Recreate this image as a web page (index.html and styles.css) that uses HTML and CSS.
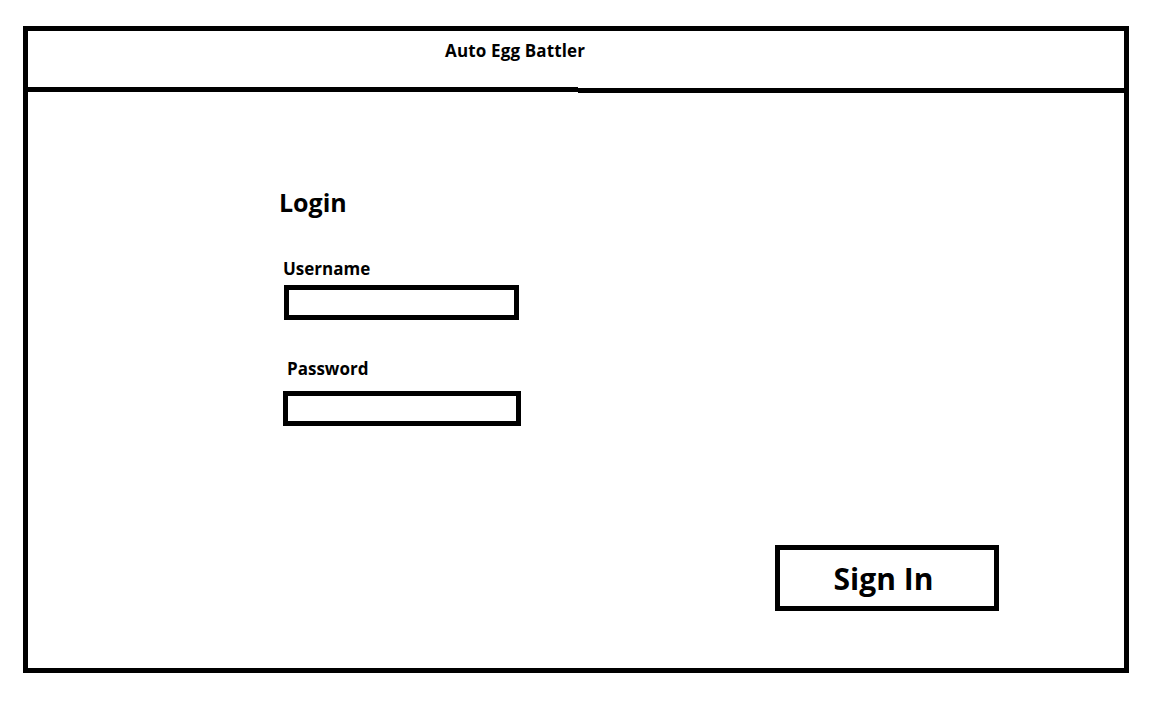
FILE: index.html
```html
<!DOCTYPE html>
<html lang="en">
<head>
<meta charset="utf-8">
<title>Auto Egg Battler</title>
<link rel="stylesheet" href="styles.css">
</head>
<body>
<div class="frame">
  <header class="header">
    <span class="title">Auto Egg Battler</span>
  </header>
  <div class="rule">
    <div class="rule-left"></div>
    <div class="rule-right"></div>
  </div>
  <main class="content">
    <h1 class="login-title">Login</h1>
    <label class="label label-user" for="user">Username</label>
    <input class="field field-user" id="user" type="text">
    <label class="label label-pass" for="pass">Password</label>
    <input class="field field-pass" id="pass" type="password">
    <button class="signin" type="button">Sign In</button>
  </main>
</div>
</body>
</html>
```

FILE: styles.css
```css
html, body {
  margin: 0;
  padding: 0;
  background: #fff;
}
body {
  font-family: "Open Sans", "Noto Sans", "Liberation Sans", sans-serif;
  font-weight: 700;
  color: #000;
}
.frame {
  margin: 26px 0 0 23px;
  width: 1106px;
  height: 647px;
  box-sizing: border-box;
  border: 5px solid #000;
  display: flex;
  flex-direction: column;
}
.header {
  height: 56px;
  box-sizing: border-box;
  padding: 11px 0 0 417px;
}
.title {
  display: block;
  font-size: 17px;
  line-height: 1;
  letter-spacing: 0.15px;
}
.rule {
  display: flex;
  height: 6px;
}
.rule-left {
  width: 550px;
  height: 5px;
  background: #000;
}
.rule-right {
  flex: 1;
  height: 5px;
  margin-top: 1px;
  background: #000;
}
.content {
  display: flex;
  flex-direction: column;
  align-items: flex-start;
  padding-left: 251px;
}
.login-title {
  margin: 97px 0 0 0;
  font-size: 25px;
  line-height: 1;
  font-weight: 700;
}
.label {
  display: block;
  font-size: 17px;
  line-height: 1;
}
.label-user {
  margin: 45px 0 0 4px;
}
.label-pass {
  margin: 40px 0 0 8px;
}
.field {
  display: block;
  box-sizing: border-box;
  height: 35px;
  border: 5px solid #000;
  border-radius: 0;
  background: #fff;
  padding: 0;
  outline: none;
}
.field-user {
  margin: 8px 0 0 5px;
  width: 235px;
}
.field-pass {
  margin: 14px 0 0 4px;
  width: 238px;
}
.signin {
  margin: 119px 0 0 496px;
  width: 224px;
  height: 66px;
  box-sizing: border-box;
  border: 5px solid #000;
  border-radius: 0;
  background: #fff;
  font-family: inherit;
  font-weight: 700;
  font-size: 30px;
  line-height: 1;
  color: #000;
  padding: 2px 7px 0 0;
  display: flex;
  align-items: center;
  justify-content: center;
}
```
